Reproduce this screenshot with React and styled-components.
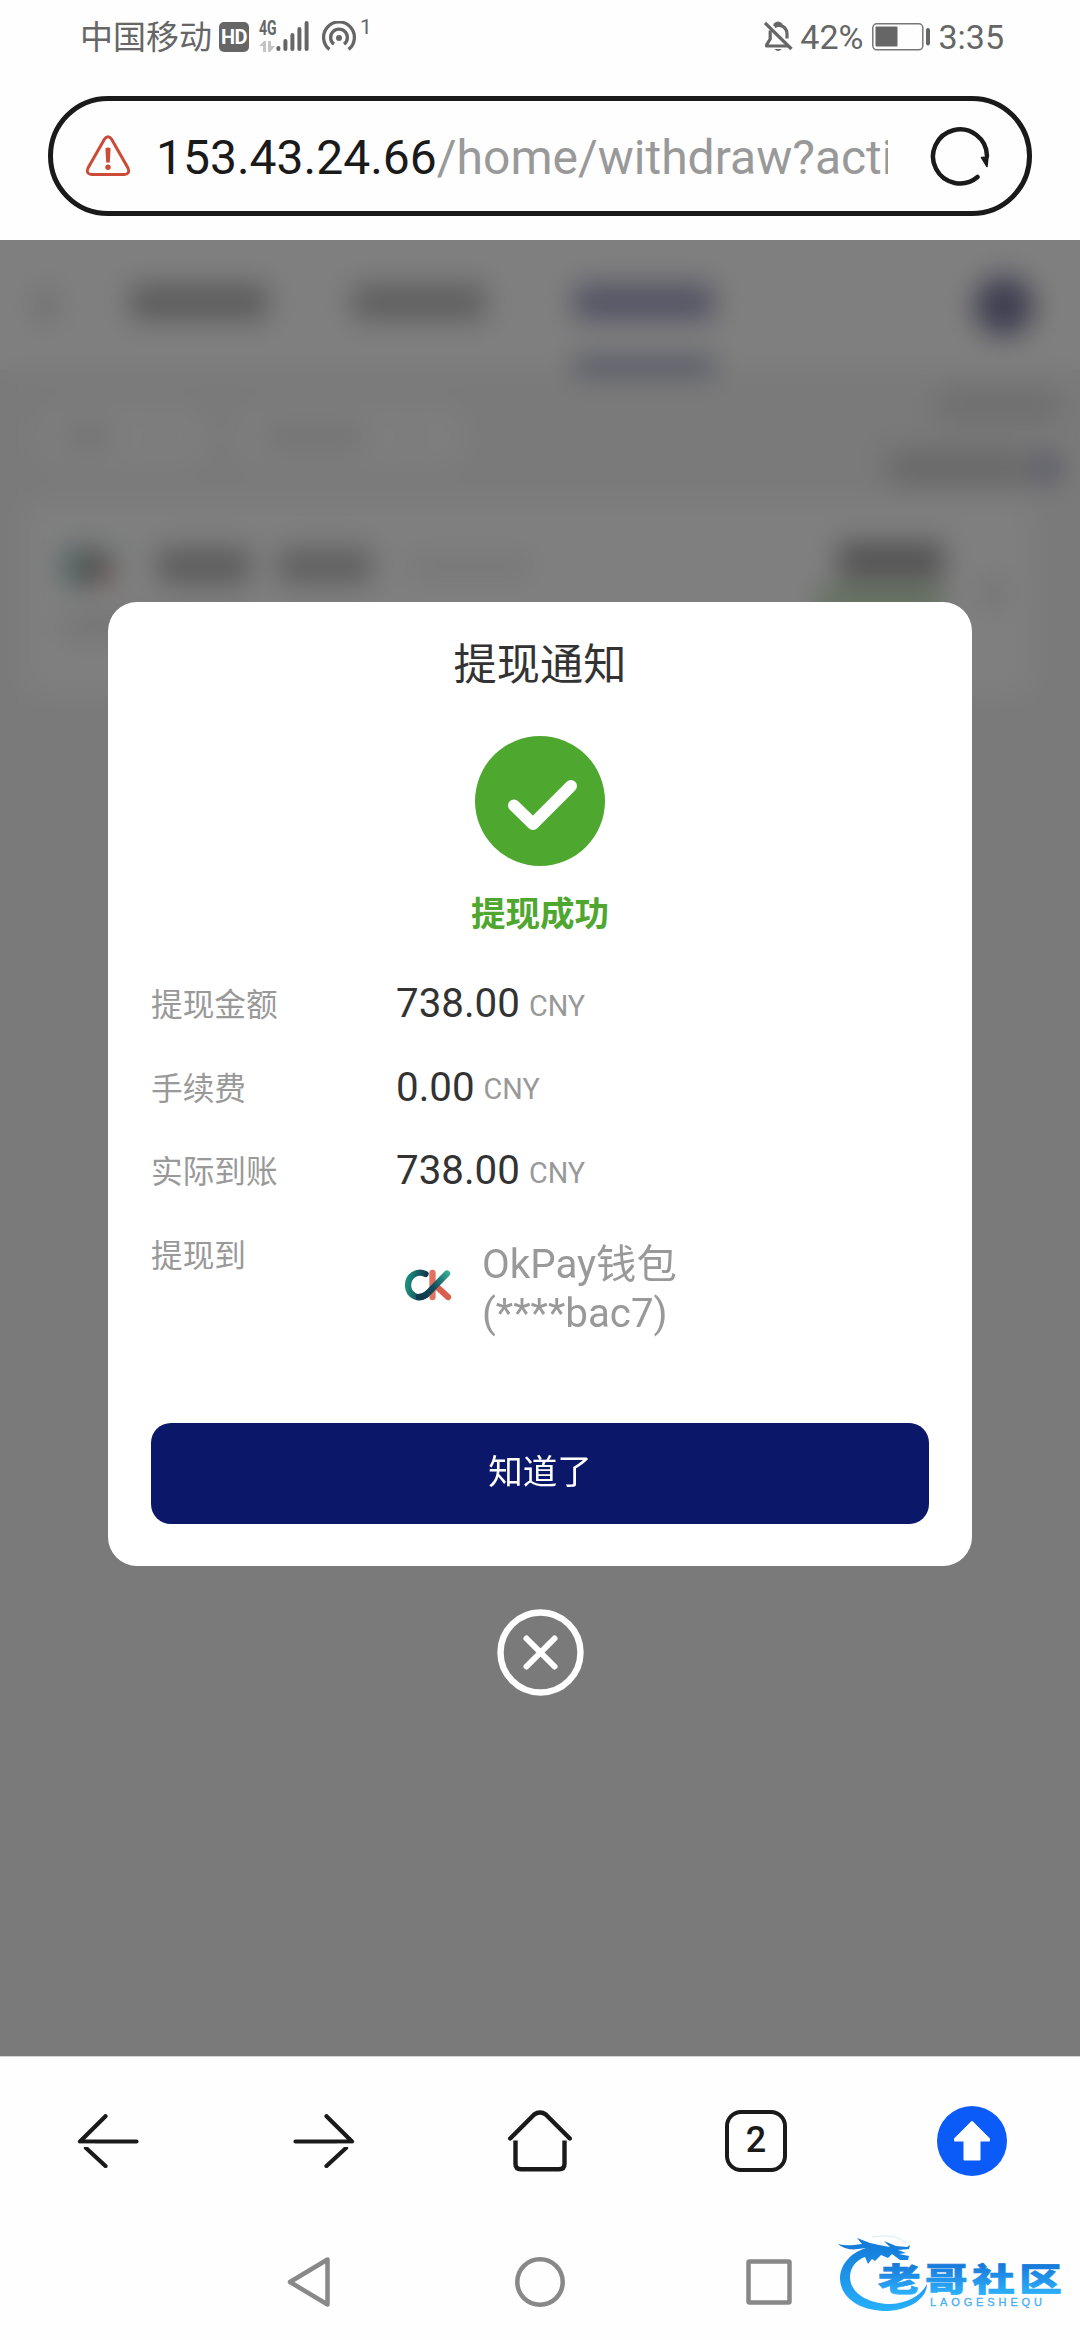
import React from "react";
import styled, { createGlobalStyle } from "styled-components";

const FONT = `Roboto, "Noto Sans CJK SC", sans-serif`;

const Global = createGlobalStyle`
  * { box-sizing: border-box; }
  body { margin: 0; background: #fff; font-family: ${FONT}; }
  svg { display: block; flex: none; }
`;

const Screen = styled.div`
  width: 1080px;
  height: 2340px;
  display: flex;
  flex-direction: column;
  position: relative;
  overflow: hidden;
  background: #fefefe;
`;

/* ---------- status bar ---------- */
const StatusBar = styled.header`
  height: 96px;
  flex: none;
  display: flex;
  justify-content: space-between;
  padding: 21px 76px 0 80px;
  color: #666;
`;
const StatusGroup = styled.div`
  display: flex;
  align-items: center;
  height: 31px;
`;
const StatusText = styled.span`
  font-size: ${(p) => p.$size || 34}px;
  line-height: 31px;
  padding-top: ${(p) => p.$drop || 0}px;
  margin-left: ${(p) => p.$gap || 0}px;
  white-space: nowrap;
`;
const HdBadge = styled.span`
  width: 30px;
  height: 30px;
  margin-left: 7px;
  border-radius: 5px;
  background: #666;
  color: #fff;
  font: 700 20px/31px ${FONT};
  text-align: center;
  letter-spacing: -0.5px;
`;
const Signal = styled.span`
  display: flex;
  margin: 0 12px 0 10px;
`;
const Network = styled.span`
  display: flex;
  flex-direction: column;
  justify-content: space-between;
  width: 17px;
  height: 31px;
  font: 700 20px/14px ${FONT};
`;
const NetworkName = styled.span`
  transform: scaleX(0.7);
  transform-origin: left;
`;
const Superscript = styled.span`
  align-self: flex-start;
  margin: -4px 0 0 3px;
  font-size: 21px;
  line-height: 20px;
`;
const BatterySlot = styled.span`
  margin: 0 8px 0 9px;
`;

/* ---------- address bar ---------- */
const AddressRow = styled.div`
  height: 144px;
  flex: none;
  padding: 0 48px;
`;
const AddressBar = styled.div`
  height: 120px;
  border: 5px solid #1a1a1a;
  border-radius: 60px;
  display: flex;
  align-items: center;
  padding: 0 37px 0 32px;
`;
const Url = styled.div`
  width: 732px;
  margin-left: 25px;
  overflow: hidden;
  white-space: nowrap;
  font-size: 48px;
  line-height: 60px;
  color: #999;
  padding-top: 3px;
`;
const Host = styled.span`
  color: #1a1a1a;
`;
const ReloadButton = styled.span`
  margin-left: 42px;
`;

/* ---------- page under the dialog ---------- */
const Viewport = styled.main`
  height: 1816px;
  flex: none;
  position: relative;
  overflow: hidden;
  background: #f4f4f4;
`;
const PageHeader = styled.div`
  height: 130px;
  background: #fff;
  display: flex;
  align-items: center;
  padding: 0 46px 0 38px;
`;
const Tab = styled.div`
  width: 140px;
  height: 130px;
  margin-left: ${(p) => p.$gap || 82}px;
  padding-top: 44px;
  border-bottom: 9px solid ${(p) => (p.$active ? "#5a6098" : "transparent")};
`;
const Bar = styled.div`
  width: ${(p) => p.$width}px;
  height: ${(p) => p.$height || 36}px;
  margin-left: ${(p) => p.$gap || 0}px;
  margin-top: ${(p) => p.$drop || 0}px;
  border-radius: 4px;
  background: ${(p) => p.$color || "#b8b8b8"};
`;
const Avatar = styled.div`
  width: 60px;
  height: 60px;
  margin-left: auto;
  margin-top: 2px;
  border-radius: 50%;
  background: #7d7da2;
`;
const FilterRow = styled.div`
  display: flex;
  align-items: center;
  height: 130px;
  padding: 4px 20px 0 36px;
`;
const FilterPill = styled.div`
  width: ${(p) => p.$width}px;
  height: 62px;
  margin-right: 30px;
  border-radius: 31px;
  background: #fdfdfd;
  display: flex;
  align-items: center;
  padding: 0 28px;
`;
const Totals = styled.div`
  margin-left: auto;
  display: flex;
  flex-direction: column;
  align-items: flex-end;
  gap: 26px;
`;
const TotalLine = styled.div`
  display: flex;
  align-items: center;
  gap: 6px;
`;
const InfoDot = styled.span`
  width: 28px;
  height: 28px;
  border-radius: 50%;
  background: #a3a3c4;
`;
const RecordCard = styled.div`
  height: 195px;
  margin: 0 46px 0 24px;
  border-radius: 20px;
  background: #fff;
  padding: 42px 34px 0 40px;
  display: flex;
`;
const RecordMain = styled.div`
  display: flex;
  flex-direction: column;
  gap: 24px;
`;
const RecordTitle = styled.div`
  display: flex;
  align-items: center;
  height: 48px;
`;
const RecordAmount = styled.div`
  margin-left: auto;
  display: flex;
  flex-direction: column;
  align-items: flex-end;
  gap: 8px;
`;

/* ---------- dialog ---------- */
const Overlay = styled.div`
  position: absolute;
  inset: 0;
  display: flex;
  flex-direction: column;
  align-items: center;
  padding-top: 362px;
  background: rgba(0, 0, 0, 0.5);
  backdrop-filter: blur(14px);
`;
const Dialog = styled.section`
  width: 864px;
  height: 964px;
  flex: none;
  border-radius: 29px;
  background: #fff;
  padding: 0 43px;
  display: flex;
  flex-direction: column;
  align-items: center;
`;
const DialogTitle = styled.h1`
  margin: 32px 0 0;
  font-size: 43.2px;
  line-height: 64px;
  font-weight: 400;
  color: #333;
`;
const StatusIcon = styled.div`
  margin-top: 38px;
`;
const StatusLabel = styled.div`
  margin-top: 23px;
  font-size: 34.56px;
  line-height: 50px;
  font-weight: 700;
  color: #4fa72f;
`;
const Details = styled.dl`
  width: 100%;
  margin: 25px 0 0;
`;
const DetailRow = styled.div`
  display: flex;
  height: ${(p) => p.$height || 83.6}px;
`;
const DetailLabel = styled.dt`
  width: 245px;
  flex: none;
  font-size: 31.68px;
  line-height: 83.6px;
  color: #999;
`;
const DetailValue = styled.dd`
  margin: 0;
  font-size: 40.32px;
  line-height: 80px;
  color: #333;
`;
const Currency = styled.span`
  margin-left: 9px;
  font-size: 28.8px;
  line-height: 1;
  vertical-align: 1.4px;
  color: #999;
`;
const Wallet = styled.dd`
  margin: 0;
  padding-top: 25px;
  display: flex;
  font-size: 40.32px;
  line-height: 49px;
  color: #999;
`;
const WalletLogo = styled.span`
  margin: 29px 28px 0 8px;
`;
const ConfirmButton = styled.button`
  width: 778px;
  height: 101px;
  margin-top: auto;
  margin-bottom: 42px;
  padding: 0 0 3px;
  border: 0;
  border-radius: 20px;
  background: #0b1769;
  color: #fff;
  font: 400 34.56px/50px ${FONT};
`;
const CloseButton = styled.div`
  margin-top: 43px;
`;

/* ---------- browser toolbar and system navigation ---------- */
const Toolbar = styled.nav`
  height: 169px;
  flex: none;
  border-top: 1px solid #d4d4d4;
  display: grid;
  grid-template-columns: repeat(5, 216px);
  align-items: center;
  justify-items: center;
`;
const TabCount = styled.span`
  width: 62px;
  height: 62px;
  border: 4.5px solid #1a1a1a;
  border-radius: 16px;
  font-size: 36px;
  line-height: 53px;
  font-weight: 500;
  color: #1a1a1a;
  text-align: center;
`;
const SystemNav = styled.nav`
  flex: 1;
  display: flex;
  align-items: center;
  padding: 0 0 2px 286px;
`;
const NavItem = styled.span`
  margin-right: ${(p) => p.$gap || 0}px;
`;
const Watermark = styled.div`
  position: absolute;
  left: 830px;
  top: 2230px;
`;

const HotspotIcon = () => (
  <svg width="36" height="31" viewBox="0 0 36 31" fill="none" stroke="#666" strokeWidth="3.3">
    <path d="M8.4 28.4 A15.4 15.4 0 1 1 27.6 28.4" />
    <path d="M13 23.2 A8.4 8.4 0 1 1 23 23.2" />
    <circle cx="18" cy="17" r="3" fill="#666" stroke="none" />
  </svg>
);

const SignalBars = () => (
  <svg width="33" height="31" viewBox="0 0 33 31" stroke="#666" strokeWidth="4" strokeLinecap="round">
    <path d="M2.4 27v1M9.4 20v8M16.4 14v14M23.4 8v20M30.6 2v26" />
  </svg>
);

const DataArrows = () => (
  <svg width="16" height="11" viewBox="0 0 16 11" fill="#c4c4c4">
    <path d="M0 5 5 0h2v11H4V5zM9 0h3v5h4l-5 6H9z" />
  </svg>
);

const BellOffIcon = () => (
  <svg width="29" height="31" viewBox="0 0 29 31" fill="none" stroke="#666" strokeWidth="3.2">
    <path d="M1 2 27.5 28" />
    <path d="M6.2 9.5V18L2.6 23.8V25H24" strokeLinejoin="round" />
    <path d="M10.5 5.6C17 2 23 7 23 13v4.6" />
    <path d="M11 5V3.5q3-3.2 6 0V5" strokeWidth="3" />
    <path d="M10.4 28h7.4q-3.7 4-7.4 0Z" fill="#666" stroke="none" />
  </svg>
);

const BatteryIcon = () => (
  <svg width="58" height="28" viewBox="0 0 58 28">
    <rect x="0.8" y="0.8" width="50" height="26" rx="4" fill="none" stroke="#777" strokeWidth="1.5" />
    <rect x="3.5" y="3.5" width="22" height="20" rx="1" fill="#666" />
    <rect x="54" y="5" width="4" height="17.5" rx="2" fill="#666" />
  </svg>
);

const WarningIcon = () => (
  <svg width="46" height="42" viewBox="0 0 46 42" fill="none" stroke="#cb4b37" strokeWidth="3">
    <path d="M19.4 4.2Q23 -.6 26.6 4.2L43 33Q45.4 39 39.5 39.4H6.5Q.6 39 3 33Z" strokeLinejoin="round" />
    <path d="M20.4 13.5q2.6-1.8 5.2 0L24.8 27.5h-3.6z" fill="#cb4b37" stroke="none" />
    <circle cx="23" cy="32.2" r="2.7" fill="#cb4b37" stroke="none" />
  </svg>
);

const ReloadIcon = () => (
  <svg width="60" height="60" viewBox="0 0 60 60" fill="none" stroke="#1a1a1a" strokeWidth="4.5" strokeLinecap="round">
    <path d="M47.5 51 A27 27 0 1 1 57 30" />
    <path d="M51.5 31.5 58 31 57 40.5Z" fill="#1a1a1a" strokeWidth="1.5" strokeLinejoin="round" />
  </svg>
);

const SuccessIcon = () => (
  <svg width="130" height="130" viewBox="0 0 130 130">
    <circle cx="65" cy="65" r="65" fill="#4ea72f" />
    <path d="M39 69.5 58 88 96 50" fill="none" stroke="#fff" strokeWidth="12" strokeLinecap="round" strokeLinejoin="round" />
  </svg>
);

const OkLogo = ({ size = 50 }) => (
  <svg width={size} height={(size * 32) / 50} viewBox="0 0 50 32" fill="none" strokeWidth="6.3" strokeLinecap="round">
    <defs>
      <linearGradient id="okTeal" gradientUnits="userSpaceOnUse" x1="18" y1="28" x2="46" y2="2">
        <stop offset="0" stopColor="#10394f" />
        <stop offset="0.4" stopColor="#124c5c" />
        <stop offset="1" stopColor="#38b59b" />
      </linearGradient>
      <linearGradient id="okRing" gradientUnits="userSpaceOnUse" x1="2" y1="16" x2="22" y2="18">
        <stop offset="0" stopColor="#1d917f" />
        <stop offset="1" stopColor="#10364d" />
      </linearGradient>
    </defs>
    <path d="M28.5 4V28" stroke="#e27260" />
    <path d="M32 17 44 28" stroke="#d9604f" />
    <path d="M21.5 5C13 1 4 7 4 16.5C4.5 27 15 31 22 26" stroke="url(#okRing)" />
    <path d="M15 28Q20 28 25 23L43 4.5" stroke="url(#okTeal)" />
  </svg>
);

const CloseIcon = () => (
  <svg width="87" height="87" viewBox="0 0 87 87" fill="none" stroke="#fff" strokeLinecap="round">
    <circle cx="43.5" cy="43.5" r="40" strokeWidth="6.4" />
    <path d="M29.5 29.5 57.5 57.5M57.5 29.5 29.5 57.5" strokeWidth="6" />
  </svg>
);

const ArrowIcon = ({ forward }) => (
  <svg width="62" height="54" viewBox="0 0 62 54" fill="none" stroke="#1a1a1a" strokeWidth="4.2" strokeLinecap="round" strokeLinejoin="round">
    <g transform={forward ? "translate(62 0) scale(-1 1)" : undefined}>
      <path d="M28.5 2.2 3 27.5H59.5" />
      <path d="M9 34 28.5 52" />
      <path d="M0 29.8H18V33H0Z" fill="#fefefe" stroke="none" />
    </g>
  </svg>
);

const HomeIcon = () => (
  <svg width="66" height="62" viewBox="0 0 66 62" fill="none" stroke="#1a1a1a" strokeWidth="4.4">
    <path d="M3.2 28.5 27 4.6Q33 .5 39 4.6L62.8 28.5" strokeLinecap="round" />
    <path d="M8.5 30.5V54Q8.5 59.2 14 59.2H52Q57.5 59.2 57.5 54V30.5" />
  </svg>
);

const UploadIcon = () => (
  <svg width="70" height="70" viewBox="0 0 70 70">
    <circle cx="35" cy="35" r="35" fill="#0a5bf7" />
    <path d="M35 16 52 33v1.5H42.5V53.5H27.5V34.5H18V33Z" fill="#fff" stroke="#fff" strokeWidth="2" strokeLinejoin="round" />
  </svg>
);

const navStroke = { fill: "none", stroke: "#888", strokeWidth: 4.5, strokeLinejoin: "round" };

const WatermarkLogo = () => (
  <svg width="240" height="90" viewBox="0 0 240 90">
    <defs>
      <linearGradient id="wm" x1="0" y1="0" x2="0" y2="1">
        <stop offset="0" stopColor="#1277d6" />
        <stop offset="1" stopColor="#27b0fb" />
      </linearGradient>
      <linearGradient id="wmText" gradientUnits="userSpaceOnUse" x1="0" y1="-29" x2="0" y2="3">
        <stop offset="0" stopColor="#1674d6" />
        <stop offset="1" stopColor="#2cb0fb" />
      </linearGradient>
    </defs>
    <path fill="url(#wm)" d="M36 18C20 23 10 35 10 49C11 69 31 81 57 81C79 80 97 69 97 54C91 66 77 73 61 74C38 74 20 63 20 47C20 38 26 30 35 27L38 34L42 29L45 31L51 25L58 28L62 24L70 30L78 30L79 26L69 24L76 23L68 20L79 19L80 15L77 17L66 16L54 11L60 17L49 15L40 13L27 8L32 14L24 15Q15 16 8 14Q16 21 28 19Z" />
    <path d="M42 7Q66 3 76 13" fill="none" stroke="#d5edfc" strokeWidth="1" />
    <text
      transform="translate(48 61) scale(1.33 1)"
      x="0"
      y="0"
      fontFamily="Noto Sans CJK SC, sans-serif"
      fontWeight="900"
      fontSize="32"
      letterSpacing="3.4"
      fill="url(#wmText)"
      stroke="url(#wmText)"
      strokeWidth="0.7"
    >
      老哥社区
    </text>
    <text x="100" y="75.5" fill="#45aef2" stroke="#45aef2" strokeWidth="0.3" fontFamily="Liberation Sans, sans-serif" fontSize="11" textLength="112" lengthAdjust="spacing">
      LAOGESHEQU
    </text>
  </svg>
);

const amounts = [
  ["提现金额", "738.00"],
  ["手续费", "0.00"],
  ["实际到账", "738.00"],
];

export default function App() {
  return (
    <Screen>
      <Global />
      <StatusBar>
        <StatusGroup>
          <StatusText $size={33} $drop={2}>中国移动</StatusText>
          <HdBadge>HD</HdBadge>
          <Signal>
            <Network>
              <NetworkName>4G</NetworkName>
              <DataArrows />
            </Network>
            <SignalBars />
          </Signal>
          <HotspotIcon />
          <Superscript>1</Superscript>
        </StatusGroup>
        <StatusGroup>
          <BellOffIcon />
          <StatusText $gap={7} $drop={1}>42%</StatusText>
          <BatterySlot>
            <BatteryIcon />
          </BatterySlot>
          <StatusText $drop={1}>3:35</StatusText>
        </StatusGroup>
      </StatusBar>

      <AddressRow>
        <AddressBar>
          <WarningIcon />
          <Url>
            <Host>153.43.24.66</Host>/home/withdraw?acti
          </Url>
          <ReloadButton>
            <ReloadIcon />
          </ReloadButton>
        </AddressBar>
      </AddressRow>

      <Viewport>
        <PageHeader>
          <Bar $width={16} $height={34} $color="#d4d4d4" />
          <Tab $gap={76}>
            <Bar $width={138} />
          </Tab>
          <Tab>
            <Bar $width={134} $color="#bebebe" />
          </Tab>
          <Tab $active>
            <Bar $width={140} $color="#a6a6c8" />
          </Tab>
          <Avatar />
        </PageHeader>
        <FilterRow>
          <FilterPill $width={170}>
            <Bar $width={48} $height={24} $color="#e6e6e6" />
            <Bar $width={14} $height={12} $gap={40} $color="#e8e8e8" />
          </FilterPill>
          <FilterPill $width={232}>
            <Bar $width={100} $height={24} $color="#e6e6e6" />
            <Bar $width={14} $height={12} $gap={40} $color="#e8e8e8" />
          </FilterPill>
          <Totals>
            <Bar $width={122} $color="#dfdfdf" />
            <TotalLine>
              <Bar $width={138} $color="#d2d2d2" />
              <InfoDot />
            </TotalLine>
          </Totals>
        </FilterRow>
        <RecordCard>
          <RecordMain>
            <RecordTitle>
              <OkLogo size={54} />
              <Bar $width={92} $gap={40} $color="#b8b8b8" />
              <Bar $width={94} $gap={28} $color="#c0c0c0" />
              <Bar $width={120} $height={22} $gap={38} $color="#eeeeee" />
            </RecordTitle>
            <Bar $width={180} $height={24} $color="#e8e8e8" />
          </RecordMain>
          <RecordAmount>
            <Bar $width={106} $height={38} $color="#a6a6a6" />
            <Bar $width={128} $height={30} $color="#c3dfba" />
          </RecordAmount>
          <Bar $width={14} $height={30} $gap={42} $drop={36} $color="#d8d8d8" />
        </RecordCard>

        <Overlay>
          <Dialog>
            <DialogTitle>提现通知</DialogTitle>
            <StatusIcon>
              <SuccessIcon />
            </StatusIcon>
            <StatusLabel>提现成功</StatusLabel>
            <Details>
              {amounts.map(([label, value]) => (
                <DetailRow key={label}>
                  <DetailLabel>{label}</DetailLabel>
                  <DetailValue>
                    {value}
                    <Currency>CNY</Currency>
                  </DetailValue>
                </DetailRow>
              ))}
              <DetailRow $height={140}>
                <DetailLabel>提现到</DetailLabel>
                <Wallet>
                  <WalletLogo>
                    <OkLogo />
                  </WalletLogo>
                  <div>
                    OkPay钱包
                    <br />
                    (****bac7)
                  </div>
                </Wallet>
              </DetailRow>
            </Details>
            <ConfirmButton>知道了</ConfirmButton>
          </Dialog>
          <CloseButton>
            <CloseIcon />
          </CloseButton>
        </Overlay>
      </Viewport>

      <Toolbar>
        <ArrowIcon />
        <ArrowIcon forward />
        <HomeIcon />
        <TabCount>2</TabCount>
        <UploadIcon />
      </Toolbar>
      <SystemNav>
        <NavItem $gap={184}>
          <svg width="45" height="54" viewBox="0 0 45 54" {...navStroke}>
            <path d="M41.5 4.5V49.5L4 27Z" />
          </svg>
        </NavItem>
        <NavItem $gap={181}>
          <svg width="50" height="50" viewBox="0 0 50 50" {...navStroke}>
            <circle cx="25" cy="25" r="22.7" />
          </svg>
        </NavItem>
        <svg width="46" height="46" viewBox="0 0 46 46" {...navStroke}>
          <rect x="2.5" y="2.5" width="41" height="41" rx="1" />
        </svg>
      </SystemNav>
      <Watermark>
        <WatermarkLogo />
      </Watermark>
    </Screen>
  );
}
